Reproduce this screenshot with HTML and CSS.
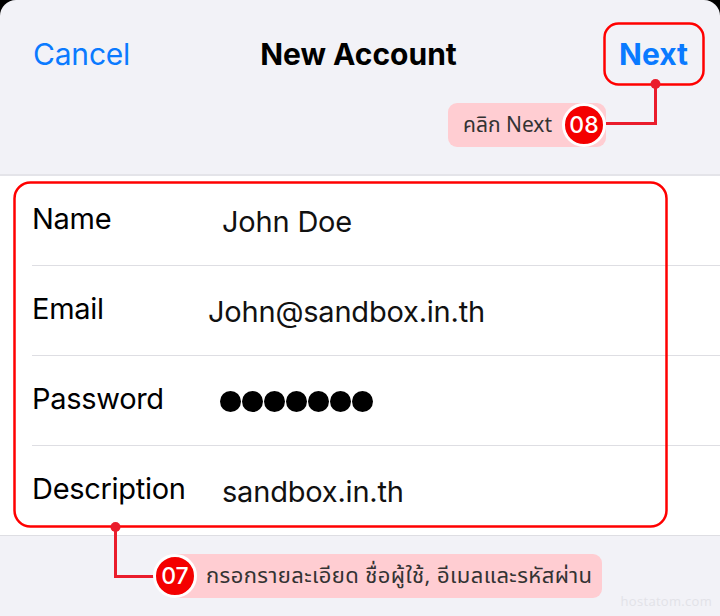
FILE: index.html
```html
<!DOCTYPE html>
<html lang="th">
<head>
    <meta charset="UTF-8">
    <meta name="viewport" content="width=device-width, initial-scale=1.0">
    <title>New Account</title>
    <link rel="stylesheet" href="styles.css">
</head>
<body>
    <div class="sheet">
        <!-- Navigation bar -->
        <header class="nav">
            <span class="nav-btn">Cancel</span>
            <h1 class="nav-title">New Account</h1>
            <span class="nav-btn nav-next">Next</span>
        </header>

        <!-- Account form -->
        <div class="form-list">
            <div class="row">
                <span class="label">Name</span>
                <span class="value">John Doe</span>
            </div>
            <div class="row">
                <span class="label">Email</span>
                <span class="value value-email">John@sandbox.in.th</span>
            </div>
            <div class="row">
                <span class="label">Password</span>
                <span class="value dots">
                    <i></i><i></i><i></i><i></i><i></i><i></i><i></i>
                </span>
            </div>
            <div class="row">
                <span class="label">Description</span>
                <span class="value">sandbox.in.th</span>
            </div>
        </div>

        <!-- Annotation strokes -->
        <svg class="marks" width="720" height="616" viewBox="0 0 720 616">
            <rect x="604.5" y="23.5" width="99" height="61" rx="14" fill="none" stroke="#ff0000" stroke-width="2.5"/>
            <rect x="14.5" y="182.5" width="652" height="344" rx="16" fill="none" stroke="#ff0000" stroke-width="2.5"/>
            <polyline points="655.5,84 655.5,123.5 606,123.5" fill="none" stroke="#ea1d2c" stroke-width="3"/>
            <circle cx="655.5" cy="84" r="5" fill="#ea1d2c"/>
            <polyline points="115.5,527 115.5,576.5 156,576.5" fill="none" stroke="#ea1d2c" stroke-width="3"/>
            <circle cx="115.5" cy="527" r="5" fill="#ea1d2c"/>
        </svg>

        <!-- Callouts -->
        <div class="callout callout-next">
            <span class="callout-text">คลิก Next</span>
            <span class="badge">08</span>
        </div>
        <div class="callout callout-form">
            <span class="badge">07</span>
            <span class="callout-text">กรอกรายละเอียด ชื่อผู้ใช้, อีเมลและรหัสผ่าน</span>
        </div>

        <div class="watermark">hostatom.com</div>
    </div>
</body>
</html>
```

FILE: styles.css
```css
/* General Reset */
* {
    margin: 0;
    padding: 0;
    box-sizing: border-box;
}
body {
    background: #000;
    font-family: Inter, 'Liberation Sans', sans-serif;
    color: #000;
}
.sheet {
    position: relative;
    width: 720px;
    height: 616px;
    background: #f2f2f7;
    border-radius: 16px 16px 0 0;
    overflow: hidden;
}
/* Navigation bar */
.nav {
    display: grid;
    grid-template-columns: 1fr auto 1fr;
    align-items: center;
    align-content: start;
    height: 176px;
    padding: 34px 32px 0 33px;
    border-bottom: 2px solid #e4e4e9;
}
.nav-btn {
    font-size: 30px;
    line-height: 40px;
    color: #0a7aff;
    letter-spacing: -0.2px;
}
.nav-title {
    font-size: 30px;
    line-height: 40px;
    font-weight: 700;
    letter-spacing: 0;
    margin-left: -4px;
}
.nav-next {
    justify-self: end;
    font-weight: 700;
    letter-spacing: 0;
}
/* Form rows */
.form-list {
    background: #fff;
    padding-left: 32px;
    border-bottom: 1px solid #dedee3;
}
.row {
    display: grid;
    grid-template-columns: 190px 1fr;
    align-items: center;
    height: 90px;
    border-bottom: 1px solid #dedee3;
}
.row:last-child {
    border-bottom: none;
    height: 89px;
}
.label {
    font-size: 29px;
    letter-spacing: -0.3px;
    margin-top: -4px;
}
.value {
    font-size: 29px;
    letter-spacing: -0.2px;
    color: #111;
    margin-top: 2px;
}
.value-email {
    margin-left: -14px;
}
.dots {
    display: flex;
    gap: 1px;
    margin-left: -2px;
}
.dots i {
    width: 21px;
    height: 21px;
    border-radius: 50%;
    background: #000;
}
/* Annotations */
.marks {
    position: absolute;
    top: 0;
    left: 0;
    pointer-events: none;
}
.callout {
    position: absolute;
    display: flex;
    align-items: center;
    height: 44px;
    background: #ffcdd2;
    border-radius: 9px;
}
.callout-next {
    left: 448px;
    top: 103px;
    padding-left: 15px;
}
.callout-next .badge {
    margin-left: 10px;
}
.callout-form {
    left: 153px;
    top: 554px;
    width: 449px;
    background: linear-gradient(to right, transparent 22px, #ffcdd2 22px);
}
.callout-form .badge {
    margin-right: 9px;
}
.callout-text {
    font-family: 'Noto Sans Thai', 'Noto Sans Thai Looped', 'Noto Sans', 'DejaVu Sans', sans-serif;
    font-size: 21px;
    color: #333;
    white-space: nowrap;
}
.callout-form .callout-text {
    font-size: 22px;
    letter-spacing: 0.4px;
}
.badge {
    display: flex;
    align-items: center;
    justify-content: center;
    width: 44px;
    height: 44px;
    border-radius: 50%;
    border: 3px solid #fff;
    background: #f40000;
    color: #fff;
    font-size: 23px;
    font-weight: 500;
    flex-shrink: 0;
}
.watermark {
    position: absolute;
    right: 8px;
    bottom: 6px;
    font-family: 'Open Sans', sans-serif;
    font-size: 13px;
    color: #e2e2e8;
    letter-spacing: 0.3px;
}
```
